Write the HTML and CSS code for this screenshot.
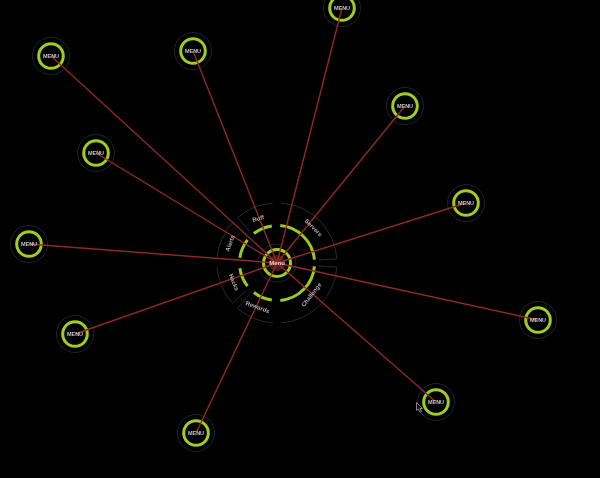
FILE: index.html
```html
<!DOCTYPE html>
<html lang="en">
<head>
    <meta charset="UTF-8">
    <title>Radial Menu</title>
    <link rel="stylesheet" href="styles.css">
</head>
<body>
    <svg class="canvas" viewBox="0 0 600 478" xmlns="http://www.w3.org/2000/svg">
        <!-- wedges -->
        <g class="wedges">
            <path d="M249.4 231.3L237.6 217.7A60 60 0 0 1 272.8 203.1"/>
            <path d="M281.2 203.1A60 60 0 0 1 336.9 258.8L318.9 260.1"/>
            <path d="M217.1 258.8A60 60 0 0 1 232.4 222.9"/>
            <path d="M217.1 267.2A60 60 0 0 0 232.4 303.1L245.8 291.1"/>
            <path d="M249.4 294.7L237.6 308.3A60 60 0 0 0 272.8 322.9"/>
            <path d="M318.9 265.9L336.9 267.2A60 60 0 0 1 281.2 322.9"/>
        </g>
        <g class="arcs">
            <path d="M253.9 233.5A37.5 37.5 0 0 1 271.8 225.9"/>
            <path d="M280.3 225.6A37.5 37.5 0 0 1 314.4 259.7"/>
            <path d="M239.9 257.8A37.5 37.5 0 0 1 247.5 239.9"/>
            <path d="M247.5 286.1A37.5 37.5 0 0 1 239.9 268.2"/>
            <path d="M271.8 300.1A37.5 37.5 0 0 1 253.9 292.5"/>
            <path d="M314.4 266.3A37.5 37.5 0 0 1 280.3 300.4"/>
        </g>

        <!-- outer nodes -->
        <g class="node" transform="translate(51 56)"><circle class="halo" r="18.5"/><circle class="ring" r="12.3"/></g>
        <g class="node" transform="translate(193 51)"><circle class="halo" r="18.5"/><circle class="ring" r="12.3"/></g>
        <g class="node" transform="translate(342 8)"><circle class="halo" r="18.5"/><circle class="ring" r="12.3"/></g>
        <g class="node" transform="translate(405 106)"><circle class="halo" r="18.5"/><circle class="ring" r="12.3"/></g>
        <g class="node" transform="translate(466 203)"><circle class="halo" r="18.5"/><circle class="ring" r="12.3"/></g>
        <g class="node" transform="translate(538 320)"><circle class="halo" r="18.5"/><circle class="ring" r="12.3"/></g>
        <g class="node" transform="translate(436 402)"><circle class="halo" r="18.5"/><circle class="ring" r="12.3"/></g>
        <g class="node" transform="translate(196 433)"><circle class="halo" r="18.5"/><circle class="ring" r="12.3"/></g>
        <g class="node" transform="translate(75 334)"><circle class="halo" r="18.5"/><circle class="ring" r="12.3"/></g>
        <g class="node" transform="translate(29 244)"><circle class="halo" r="18.5"/><circle class="ring" r="12.3"/></g>
        <g class="node" transform="translate(96 153)"><circle class="halo" r="18.5"/><circle class="ring" r="12.3"/></g>

        <!-- center -->
        <g class="node" transform="translate(277 263)"><circle class="halo" r="19"/><circle class="ring" r="13.5"/></g>
        <circle class="hub-glow" cx="277" cy="263" r="8"/>

        <g class="links">
            <line x1="277" y1="263" x2="51" y2="56"/>
            <line x1="277" y1="263" x2="193" y2="51"/>
            <line x1="277" y1="263" x2="342" y2="8"/>
            <line x1="277" y1="263" x2="405" y2="106"/>
            <line x1="277" y1="263" x2="466" y2="203"/>
            <line x1="277" y1="263" x2="538" y2="320"/>
            <line x1="277" y1="263" x2="436" y2="402"/>
            <line x1="277" y1="263" x2="196" y2="433"/>
            <line x1="277" y1="263" x2="75" y2="334"/>
            <line x1="277" y1="263" x2="29" y2="244"/>
            <line x1="277" y1="263" x2="96" y2="153"/>
        </g>

        <g class="labels">
            <text x="51" y="58">MENU</text>
            <text x="193" y="53">MENU</text>
            <text x="342" y="10">MENU</text>
            <text x="405" y="108">MENU</text>
            <text x="466" y="205">MENU</text>
            <text x="538" y="322">MENU</text>
            <text x="436" y="404">MENU</text>
            <text x="196" y="435">MENU</text>
            <text x="75" y="336">MENU</text>
            <text x="29" y="246">MENU</text>
            <text x="96" y="155">MENU</text>
            <text class="hub-label" x="277" y="265">Menu</text>
        </g>
        <g class="labels wedge-labels">
            <text transform="translate(258.7 220.5) rotate(-15)">Buff</text>
            <text transform="translate(312 229) rotate(45)">Servers</text>
            <text transform="translate(232 244) rotate(-70)">Alerts</text>
            <text transform="translate(232 283) rotate(68)">Hacks</text>
            <text transform="translate(257 309) rotate(20)">Rewards</text>
            <text transform="translate(313 296) rotate(-52)">Challenge</text>
        </g>

        <!-- pointer -->
        <path class="cursor" d="M416.5 402.5V410.5L418.5 409L420 412.5L421.5 411.5L420 408.5H422.5Z"/>
    </svg>
</body>
</html>
```

FILE: styles.css
```css
html, body {
    margin: 0;
    height: 100%;
    background-color: #000;
    overflow: hidden;
}
.canvas {
    display: block;
    width: 600px;
    height: 478px;
    filter: blur(0.5px);
}
.wedges path {
    fill: none;
    stroke: #2b2b2b;
    stroke-width: 1;
}
.arcs path {
    fill: none;
    stroke: #9fc81e;
    stroke-width: 3;
}
.halo {
    fill: none;
    stroke: #232323;
    stroke-width: 1;
}
.ring {
    fill: #000;
    stroke: #a4cc1e;
    stroke-width: 3;
}
.hub-glow {
    fill: #4a1c1c;
}
.links line {
    stroke: #8f2a25;
    stroke-width: 1.4;
}
.labels text {
    font-family: "Liberation Sans", Arial, sans-serif;
    font-size: 5.5px;
    font-weight: bold;
    fill: #c4c4c4;
    text-anchor: middle;
}
.labels .hub-label {
    font-size: 6px;
    fill: #e4d0d0;
}
.wedge-labels text {
    font-size: 6px;
    fill: #b0b0b0;
}
.cursor {
    fill: #111;
    stroke: #a0a0a0;
    stroke-width: 0.8;
}
```
